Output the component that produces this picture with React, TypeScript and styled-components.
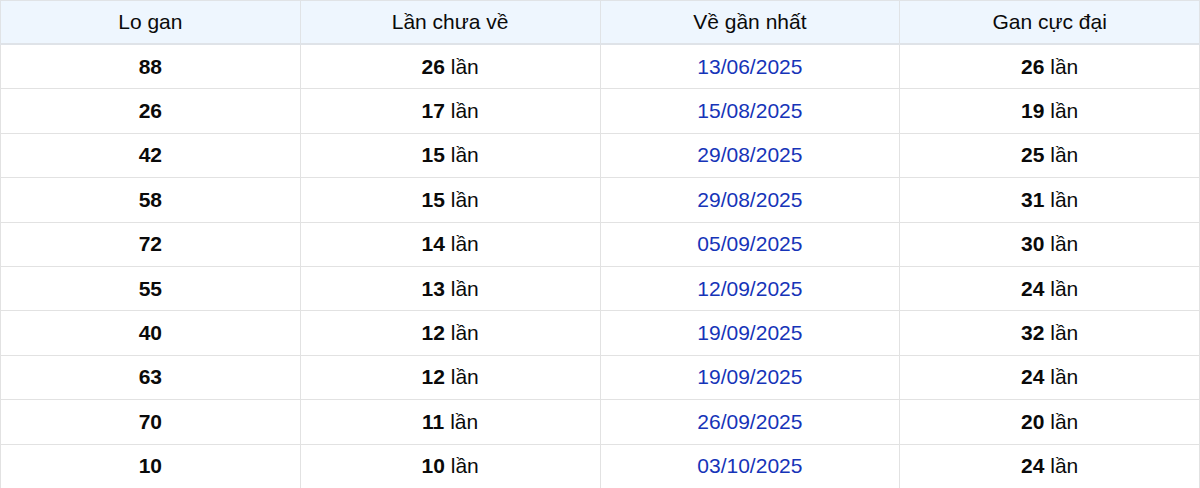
import styled, { createGlobalStyle } from 'styled-components';

const GlobalStyle = createGlobalStyle`
  html, body {
    margin: 0;
    padding: 0;
    background: #fff;
  }
  body {
    font-family: 'Liberation Sans', Arial, sans-serif;
  }
`;

const Table = styled.table`
  width: 1200px;
  border-collapse: collapse;
  table-layout: fixed;
  font-size: 21px;
  color: #0a0a0a;
`;

const HeadCell = styled.th`
  height: 42px;
  padding: 0;
  font-weight: 400;
  text-align: center;
  background: #eef6fe;
  border: 1px solid #e0e3e6;
  border-bottom: 2px solid #dfe3e8;
`;

const Cell = styled.td<{ $date?: boolean }>`
  height: 43.4px;
  padding: 0;
  text-align: center;
  border: 1px solid #e2e2e2;
  color: ${(p) => (p.$date ? '#1634b8' : '#0a0a0a')};

  b {
    font-weight: 700;
  }
`;

type Row = {
  lo: string;
  lan: number;
  date: string;
  max: number;
};

const rows: Row[] = [
  { lo: '88', lan: 26, date: '13/06/2025', max: 26 },
  { lo: '26', lan: 17, date: '15/08/2025', max: 19 },
  { lo: '42', lan: 15, date: '29/08/2025', max: 25 },
  { lo: '58', lan: 15, date: '29/08/2025', max: 31 },
  { lo: '72', lan: 14, date: '05/09/2025', max: 30 },
  { lo: '55', lan: 13, date: '12/09/2025', max: 24 },
  { lo: '40', lan: 12, date: '19/09/2025', max: 32 },
  { lo: '63', lan: 12, date: '19/09/2025', max: 24 },
  { lo: '70', lan: 11, date: '26/09/2025', max: 20 },
  { lo: '10', lan: 10, date: '03/10/2025', max: 24 },
];

export default function App() {
  return (
    <>
      <GlobalStyle />
      <Table>
        <thead>
          <tr>
            <HeadCell>Lo gan</HeadCell>
            <HeadCell>Lần chưa về</HeadCell>
            <HeadCell>Về gần nhất</HeadCell>
            <HeadCell>Gan cực đại</HeadCell>
          </tr>
        </thead>
        <tbody>
          {rows.map((r) => (
            <tr key={r.lo}>
              <Cell>
                <b>{r.lo}</b>
              </Cell>
              <Cell>
                <b>{r.lan}</b> lần
              </Cell>
              <Cell $date>{r.date}</Cell>
              <Cell>
                <b>{r.max}</b> lần
              </Cell>
            </tr>
          ))}
        </tbody>
      </Table>
    </>
  );
}
